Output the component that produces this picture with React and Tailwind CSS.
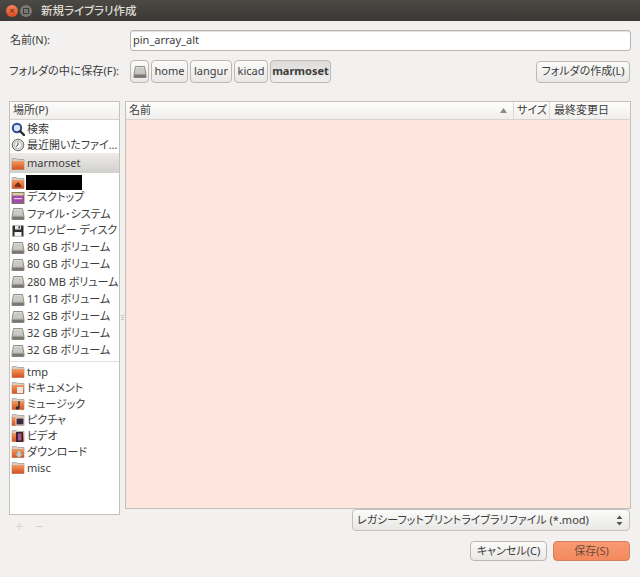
import React from "react";

const FONT = "font-['Noto_Sans','Noto_Sans_CJK_JP',sans-serif] [font-feature-settings:'palt']";

// Orange Ubuntu-style folder, shared by places and special directories
function Folder({ children }) {
  return (
    <svg width="14" height="14" viewBox="0 0 14 14" className="shrink-0">
      <defs>
        <linearGradient id="fold" x1="0" y1="0" x2="0" y2="1">
          <stop offset="0" stopColor="#f39a62" />
          <stop offset="1" stopColor="#d64f1b" />
        </linearGradient>
      </defs>
      <path d="M1 3V12.5H13V2.5H6.5L5.5 1.5H1.5Z" fill="#d6d2cb" stroke="#9b948b" strokeWidth="0.7" />
      <rect x="1" y="4" width="12" height="8.6" rx="0.6" fill="url(#fold)" />
      {children}
    </svg>
  );
}

function Drive() {
  return (
    <svg width="14" height="14" viewBox="0 0 14 14" className="shrink-0">
      <defs>
        <linearGradient id="drv" x1="0" y1="0" x2="0" y2="1">
          <stop offset="0" stopColor="#e2e2df" />
          <stop offset="1" stopColor="#a9a9a4" />
        </linearGradient>
      </defs>
      <path d="M2.5 1.5H11.5L13 9.5V12.5H1V9.5Z" fill="url(#drv)" stroke="#77776f" strokeWidth="0.8" />
      <rect x="1.4" y="9.6" width="11.2" height="2.6" fill="#77776f" />
      <ellipse cx="7" cy="5.4" rx="4" ry="2.6" fill="#c9c9c5" />
    </svg>
  );
}

function Search() {
  return (
    <svg width="14" height="14" viewBox="0 0 14 14" className="shrink-0">
      <circle cx="6" cy="6" r="4.2" fill="#dbe6f5" stroke="#2c4a8f" strokeWidth="2" />
      <path d="M9 9L13 13" stroke="#2a2a2a" strokeWidth="2.4" strokeLinecap="round" />
    </svg>
  );
}

function Clock() {
  return (
    <svg width="14" height="14" viewBox="0 0 14 14" className="shrink-0">
      <circle cx="7" cy="7" r="5.8" fill="#d9d9d6" stroke="#6a6a66" strokeWidth="1" />
      <circle cx="7" cy="7" r="3.6" fill="#f6f6f4" stroke="#a3a39f" strokeWidth="0.6" />
      <path d="M7 4.5V7L5 8.5" fill="none" stroke="#3c3c3c" strokeWidth="0.9" />
    </svg>
  );
}

function Desktop() {
  return (
    <svg width="14" height="14" viewBox="0 0 14 14" className="shrink-0">
      <rect x="1" y="1.5" width="12" height="11" fill="#a64bae" stroke="#6c6a3c" strokeWidth="0.8" />
      <rect x="1.4" y="1.9" width="11.2" height="2.6" fill="#d6d19c" />
      <rect x="3" y="7" width="8" height="1.2" fill="#e6c4e8" />
    </svg>
  );
}

function Floppy() {
  return (
    <svg width="14" height="14" viewBox="0 0 14 14" className="shrink-0">
      <path d="M1.5 1.5H12.5V12.5H1.5Z" fill="#2e2e2e" />
      <rect x="4" y="1.5" width="6" height="4" fill="#e8e8e8" />
      <rect x="3.5" y="8" width="7" height="4.5" fill="#f3f3f3" />
      <rect x="7.5" y="2.2" width="1.4" height="2.4" fill="#2e2e2e" />
    </svg>
  );
}

function Row({ icon, h = "h-4", children }) {
  return (
    <div className={`flex ${h} items-center gap-[2px] pl-[1px] text-[11px] whitespace-nowrap text-[#3c3c3c]`}>
      {icon}
      <span>{children}</span>
    </div>
  );
}

function Crumb({ w, bold, children }) {
  return (
    <div
      className={`flex h-[23px] ${w} items-center justify-center rounded-[4px] border border-[#bdb8b2] text-[11px] text-[#3c3c3c] ${
        bold ? "bg-gradient-to-b from-[#dedcda] to-[#f0efee] text-[10.5px] font-bold" : "bg-gradient-to-b from-[#fbfbfa] to-[#e9e8e6]"
      }`}
    >
      {children}
    </div>
  );
}

export default function App() {
  return (
    <div className={`flex h-[577px] w-[640px] flex-col overflow-hidden bg-[#f2f1f0] ${FONT} text-[#3c3c3c]`}>
      {/* window title bar */}
      <div className="flex h-[21px] shrink-0 items-center bg-gradient-to-b from-[#4a4944] to-[#3a3935] pl-[6px]">
        <div className="flex h-[12px] w-[12px] items-center justify-center rounded-full bg-gradient-to-b from-[#f4835a] to-[#d9481c] text-[9px] leading-none text-[#5a2412]">
          ×
        </div>
        <div className="ml-[2px] flex h-[12px] w-[12px] items-center justify-center rounded-full bg-[#7a7973]">
          <div className="h-[6px] w-[6px] border border-[#3f3e3a]" />
        </div>
        <span className="ml-[9px] text-[11.5px] leading-none font-medium text-[#dfdbd2]">新規ライブラリ作成</span>
      </div>

      {/* name entry */}
      <div className="mt-[9px] flex h-[21px] shrink-0 items-center pr-[9px] pl-[10px]">
        <span className="w-[120px] text-[11px]">名前(N):</span>
        <div className="flex h-[21px] flex-1 items-center rounded-[3px] border border-[#b8b4ae] bg-white pl-[2px] text-[11px] shadow-[inset_0_1px_1px_#e0e0e0]">
          pin_array_alt
        </div>
      </div>

      {/* save-in path bar */}
      <div className="mt-[9px] flex h-[23px] shrink-0 items-center pr-[10px] pl-[9px]">
        <span className="w-[121px] text-[11.25px] whitespace-nowrap">フォルダの中に保存(F):</span>
        <div className="flex items-center gap-[2px]">
          <Crumb w="w-[19px]">
            <Drive />
          </Crumb>
          <Crumb w="w-[37px]">home</Crumb>
          <Crumb w="w-[42px]">langur</Crumb>
          <Crumb w="w-[34px]">kicad</Crumb>
          <Crumb w="w-[61px]" bold>
            marmoset
          </Crumb>
        </div>
        <div className="ml-auto flex h-[22px] w-[94px] items-center justify-center rounded-[4px] border border-[#bdb8b2] bg-gradient-to-b from-[#fbfbfa] to-[#e9e8e6] text-[11px] whitespace-nowrap">
          フォルダの作成(L)
        </div>
      </div>

      {/* places sidebar and file list */}
      <div className="mt-[18px] flex h-[414px] shrink-0 pr-[9px] pl-[9px]">
        <div className="flex w-[111px] shrink-0 flex-col">
          <div className="flex h-[414px] flex-col border border-[#c4c0ba] bg-white">
            <div className="flex h-[18px] shrink-0 items-center border-b border-[#d6d3ce] bg-gradient-to-b from-[#fdfdfc] to-[#f0efee] pl-[3px] text-[11px]">
              場所(P)
            </div>
            <div className="pt-[1px]">
              <Row icon={<Search />}>検索</Row>
              <Row icon={<Clock />}>最近開いたファイ...</Row>
              <div className="bg-gradient-to-b from-[#eeece9] to-[#d2d0cc] pt-[1px]">
                <Row h="h-[19px]" icon={<Folder />}>
                  marmoset
                </Row>
              </div>
              <div className="mt-[2px] mb-[-1px] flex h-[15px] items-center gap-px pl-[1px]">
                <Folder>
                  <path d="M7 6L10 9V11H4V9Z" fill="#7a2f12" />
                </Folder>
                <div className="h-[15px] w-[56px] bg-black" />
              </div>
              <Row h="h-[17px]" icon={<Desktop />}>デスクトップ</Row>
              <Row icon={<Drive />}>ファイル･システム</Row>
              <Row h="h-[17px]" icon={<Floppy />}>フロッピー ディスク</Row>
              <Row h="h-[17px]" icon={<Drive />}>80 GB ボリューム</Row>
              <Row h="h-[17px]" icon={<Drive />}>80 GB ボリューム</Row>
              <Row h="h-[18px]" icon={<Drive />}>280 MB ボリューム</Row>
              <Row h="h-[17px]" icon={<Drive />}>11 GB ボリューム</Row>
              <Row h="h-[17px]" icon={<Drive />}>32 GB ボリューム</Row>
              <Row h="h-[17px]" icon={<Drive />}>32 GB ボリューム</Row>
              <Row h="h-[17px]" icon={<Drive />}>32 GB ボリューム</Row>
              <div className="mt-[2px] mb-[2px] h-px bg-[#e0deda]" />
              <Row icon={<Folder />}>tmp</Row>
              <Row icon={<Folder><rect x="6" y="6" width="6" height="6" fill="#e9e9e6" /></Folder>}>ドキュメント</Row>
              <Row icon={<Folder><path d="M8 4V11" stroke="#2e2e2e" strokeWidth="1.4" /><circle cx="6.5" cy="11" r="1.8" fill="#2e2e2e" /></Folder>}>ミュージック</Row>
              <Row icon={<Folder><rect x="5" y="5" width="8" height="7" fill="#3b2b3c" stroke="#e6e6e6" /></Folder>}>ピクチャ</Row>
              <Row icon={<Folder><rect x="5" y="3" width="7" height="10" fill="#3a2230" /><rect x="7" y="4.5" width="3.4" height="7" fill="#a4569c" /></Folder>}>ビデオ</Row>
              <Row icon={<Folder><path d="M6 6H10V9H12L8 13L4 9H6Z" fill="#c9c7c2" stroke="#8c8a85" strokeWidth="0.5" /></Folder>}>ダウンロード</Row>
              <Row icon={<Folder />}>misc</Row>
            </div>
          </div>
        </div>

        {/* pane resize grip */}
        <div className="flex w-[5px] shrink-0 flex-col items-center gap-px pt-[214px]">
          <div className="h-px w-[3px] bg-[#c9c6c1]" />
          <div className="h-px w-[3px] bg-[#c9c6c1]" />
          <div className="h-px w-[3px] bg-[#c9c6c1]" />
        </div>

        <div className="flex h-[408px] flex-1 flex-col border border-[#c4c0ba] bg-[#fee6de]">
          <div className="flex h-[18px] shrink-0 items-stretch border-b border-[#d6d3ce] bg-gradient-to-b from-[#fdfdfc] to-[#f0efee] text-[11px]">
            <div className="flex flex-1 items-center justify-between pr-[6px] pl-[3px]">
              <span>名前</span>
              <svg width="7" height="5" viewBox="0 0 7 5">
                <path d="M0 5L3.5 0L7 5Z" fill="#8a8a86" />
              </svg>
            </div>
            <div className="flex w-[36px] items-center border-l border-[#dcdad6] pl-[3px] whitespace-nowrap">サイズ</div>
            <div className="flex w-[81px] items-center border-l border-[#dcdad6] pl-[4px] whitespace-nowrap">最終変更日</div>
          </div>
        </div>
      </div>

      {/* add / remove bookmark, faded out */}
      <div className="relative h-0">
        <div className="absolute top-[1px] left-[15px] flex gap-[11px] text-[15px] leading-5 text-[#d8d6d3]">
          <span>+</span>
          <span>−</span>
        </div>
      </div>

      {/* file type filter */}
      <div className="mt-[-6px] flex shrink-0 justify-end pr-[10px]">
        <div className="flex h-[22px] w-[278px] items-center justify-between rounded-[4px] border border-[#c4c0ba] bg-gradient-to-b from-[#fbfbfa] to-[#e9e8e6] pr-[6px] pl-[4px] text-[11px] whitespace-nowrap">
          <span>レガシーフットプリントライブラリファイル (*.mod)</span>
          <svg width="7" height="11" viewBox="0 0 7 11">
            <path d="M0.5 4L3.5 0.5L6.5 4Z M0.5 7L3.5 10.5L6.5 7Z" fill="#55534f" />
          </svg>
        </div>
      </div>

      {/* dialog actions */}
      <div className="mt-[10px] flex shrink-0 justify-end gap-[6px] pr-[10px]">
        <div className="flex h-[20px] w-[77px] items-center justify-center rounded-[4px] border border-[#bdb8b2] bg-gradient-to-b from-[#fbfbfa] to-[#e9e8e6] text-[11px] whitespace-nowrap">
          キャンセル(C)
        </div>
        <div className="flex h-[20px] w-[77px] items-center justify-center rounded-[4px] border border-[#d5805a] bg-gradient-to-b from-[#f79a73] to-[#f4885d] text-[11px] whitespace-nowrap text-[#6e4a3a]">
          保存(S)
        </div>
      </div>
    </div>
  );
}
